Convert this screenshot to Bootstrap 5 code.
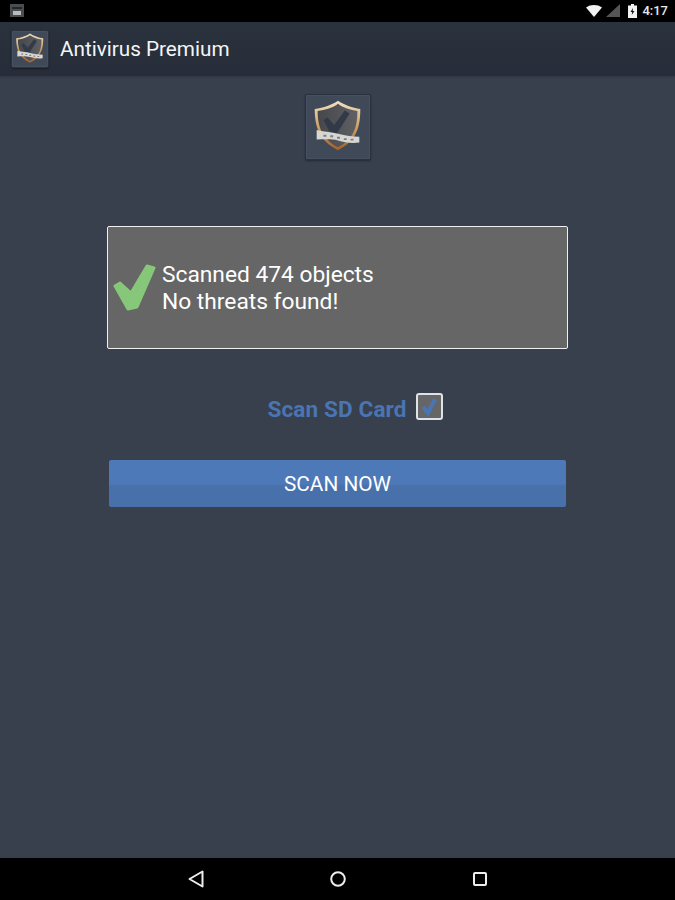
<!DOCTYPE html>
<html lang="en">
<head>
  <meta charset="UTF-8">
  <meta name="viewport" content="width=device-width, initial-scale=1.0">
  <title>Antivirus Premium</title>
  <link href="https://cdn.jsdelivr.net/npm/bootstrap@5.3.0/dist/css/bootstrap.min.css" rel="stylesheet">
  <style>
    html, body { height: 100%; }
    body { background: #383f4d; font-family: Roboto, "Liberation Sans", sans-serif; color: #fff; overflow: hidden; }
    .screen { height: 900px; }
    .status-row { height: 22px; background: #000; padding: 0 7px 0 10px; }
    .status-time { font-size: 13px; font-weight: 500; color: #e8e8e8; margin-left: 5px; line-height: 22px; }
    .top-bar { height: 54px; background: linear-gradient(#2a323e, #262d38); padding-left: 11px; box-shadow: 0 1px 2px rgba(0,0,0,.15); }
    .top-title { font-size: 20.7px; line-height: 28px; margin-left: 11px; color: #f4f5f6; }
    .logo-tile { background: #3f4958; border: 1px solid #2b323d; box-shadow: inset 0 0 0 1px #465061, 0 1px 2px rgba(0,0,0,.35); border-radius: 2px; }
    .logo-small { width: 38px; height: 38px; }
    .logo-big { width: 66px; height: 66px; margin-top: 18px; }
    .result-box { width: 461px; height: 123px; margin-top: 66px; background: #666; border: 1px solid #f0f0f0; border-radius: 2px; padding-left: 5px; }
    .result-text { font-size: 22.75px; line-height: 26.500px; margin-left: 5px; padding-top: 2px; }
    .sd-row { margin-top: 44px; height: 26px; padding-left: 35px; }
    .sd-label { color: #4a75b3; font-size: 22.6px; font-weight: 700; line-height: 26px; margin-top: 4px; margin-right: 9px; letter-spacing: .1px; }
    .sd-box { width: 27px; height: 27px; background: #666; border: 2px solid #dfe2e6; border-radius: 3px; }
    .scan-btn { width: 457px; height: 47px; margin-top: 41px; border: 0; border-radius: 2px; color: #fff; font-size: 20.8px; background: linear-gradient(#4e79b9 0, #4e79b9 50%, #4870aa 56%, #4870aa 100%); padding: 3px 0 0; }
    .scan-btn:hover { color: #fff; background: linear-gradient(#4e79b9 0, #4e79b9 50%, #4870aa 56%, #4870aa 100%); }
    .bottom-bar { height: 42px; background: #000; }
    .bottom-spot { width: 300px; }
  </style>
</head>
<body>
  <svg width="0" height="0" class="d-block">
    <defs>
      <linearGradient id="rim" x1="0" y1="0" x2="0" y2="1">
        <stop offset="0" stop-color="#f0e2c4"/>
        <stop offset=".5" stop-color="#d2a468"/>
        <stop offset="1" stop-color="#a85f25"/>
      </linearGradient>
      <linearGradient id="plate" x1="0" y1="0" x2="1" y2="0">
        <stop offset="0" stop-color="#45474b"/>
        <stop offset="1" stop-color="#5f6063"/>
      </linearGradient>
      <symbol id="shield" viewBox="0 0 66 66">
        <path d="M33 6C27 10 18 13.500 9 14.500C9 32 13 47 33 57C53 47 56 32 56 14.500C48 13.500 39 10 33 6Z" fill="url(#rim)"/>
        <path d="M33 9C28 13 20 15.500 12 16.500C12 32 16 45 33 54C50 45 53 32 53 16.500C46 15.500 38 13 33 9Z" fill="url(#plate)"/>
        <path d="M18 26L22 23L29 31L40 16L45 19L31 41L26 41Z" fill="#323a4a"/>
        <path d="M11 36C20 38 27 38 33 40C41 42 48 43 55 43L55 49C47 50 40 49 33 47C26 45 18 46 11 46Z" fill="#d6d6d3"/>
        <path d="M18 41h3v2h-3zM25 41.500h3v2h-3zM32 43h3v2h-3zM39 44.500h3v2h-3zM46 45h3v2h-3z" fill="#7b7d80"/>
      </symbol>
    </defs>
  </svg>

  <div class="screen d-flex flex-column">
    <div class="status-row d-flex align-items-center">
      <svg width="14" height="14" viewBox="0 0 14 14">
        <rect width="14" height="13" fill="#4a4d50"/>
        <path d="M2 3h10v2H2z" fill="#23262b"/>
        <path d="M3 7h8v4H3z" fill="#b9bcbd"/>
      </svg>
      <div class="ms-auto d-flex align-items-center">
        <svg width="16" height="12" viewBox="0 0 16 12"><path d="M0 2.5C4.500-.8 11.500-.8 16 2.500L8 12Z" fill="#f2f2f2"/></svg>
        <svg width="14" height="14" viewBox="0 0 14 14" class="ms-1"><path d="M14 0V13H0Z" fill="#555"/></svg>
        <svg width="9" height="14" viewBox="0 0 9 14" class="ms-2"><path d="M3 0h3v1.500h3V14H0V1.500h3Z" fill="#f2f2f2"/><path d="M5 4L2.500 8H4.200L3.700 11L6.500 7H4.700Z" fill="#111"/></svg>
        <span class="status-time">4:17</span>
      </div>
    </div>

    <div class="top-bar d-flex align-items-center">
      <div class="logo-tile logo-small d-flex align-items-center justify-content-center">
        <svg width="38" height="38" class="flex-shrink-0"><use href="#shield"/></svg>
      </div>
      <div class="top-title">Antivirus Premium</div>
    </div>

    <div class="flex-grow-1 d-flex flex-column align-items-center">
      <div class="logo-tile logo-big d-flex align-items-center justify-content-center">
        <svg width="64" height="64" class="flex-shrink-0"><use href="#shield"/></svg>
      </div>

      <div class="result-box d-flex align-items-center">
        <svg width="44" height="48" viewBox="0 0 44 48">
          <path d="M2 22L7 19L18 29L34 2L41 4L24 43L15 45Z" fill="#86c77a" stroke="#86c77a" stroke-width="3" stroke-linejoin="round"/>
        </svg>
        <div class="result-text">Scanned 474 objects<br>No threats found!</div>
      </div>

      <div class="sd-row d-flex align-items-start">
        <span class="sd-label">Scan SD Card</span>
        <span class="sd-box d-flex align-items-center justify-content-center">
          <svg width="21" height="21" viewBox="0 0 21 21"><path d="M4 11L9 17L16 3" fill="none" stroke="#4a75b3" stroke-width="4"/></svg>
        </span>
      </div>

      <button type="button" class="btn scan-btn">SCAN NOW</button>
    </div>

    <div class="bottom-bar d-flex align-items-center justify-content-center">
      <div class="bottom-spot d-flex align-items-center justify-content-between">
        <svg width="16" height="18" viewBox="0 0 16 18"><path d="M14.500 1.500V16.500L1.500 9Z" fill="none" stroke="#eee" stroke-width="2" stroke-linejoin="round"/></svg>
        <svg width="16" height="16" viewBox="0 0 16 16"><circle cx="8" cy="8" r="6.800" fill="none" stroke="#eee" stroke-width="2"/></svg>
        <svg width="16" height="14" viewBox="-1 0 16 14"><rect x="1" y="1" width="12" height="12" rx="1" fill="none" stroke="#eee" stroke-width="2"/></svg>
      </div>
    </div>
  </div>
  <script src="https://cdn.jsdelivr.net/npm/bootstrap@5.3.0/dist/js/bootstrap.bundle.min.js"></script>
</body>
</html>
